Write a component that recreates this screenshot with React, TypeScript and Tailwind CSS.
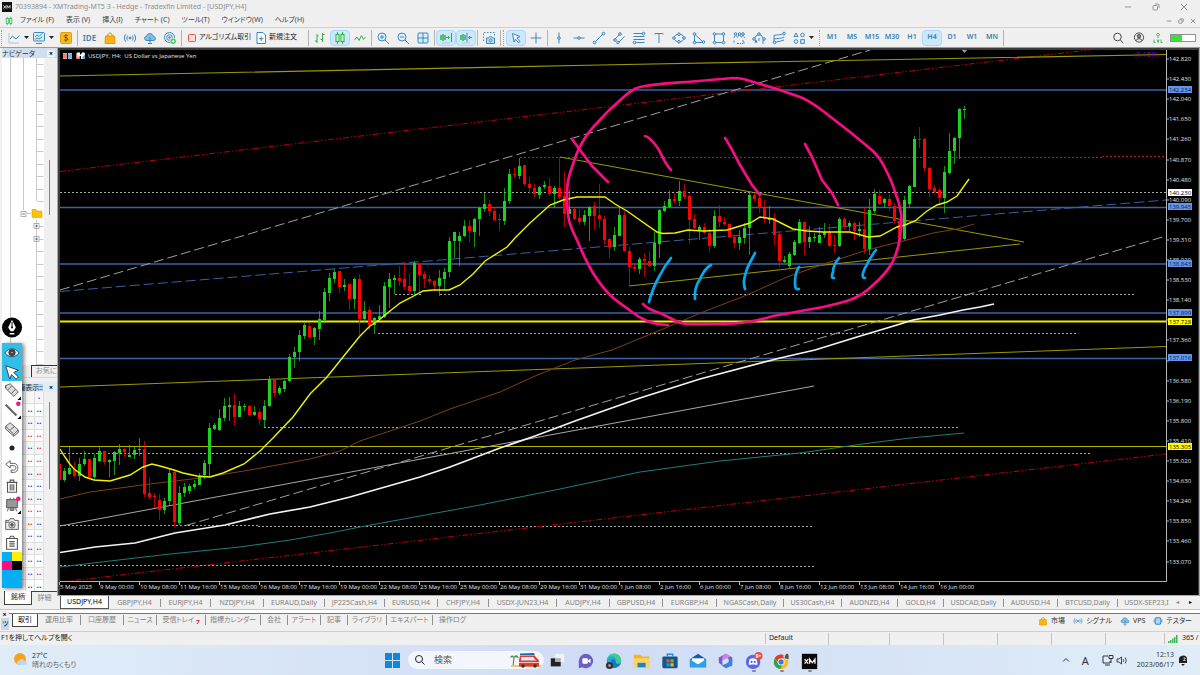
import { useState } from 'react';
import type { ReactNode } from 'react';

/* ---------- price chart data ---------- */

type Row = [string, number, number, number, number];

// Rows are [direction, body top, body bottom, high, low] in thirds of a unit below each block's origin.
const BLOCKS: { start: number; origin: number; rows: Row[] }[] = [
  {
    start: -1,
    origin: 260,
    rows: [
      ['r', 612, 660, 612, 660], ['g', 633, 660, 625, 665], ['g', 623, 642, 560, 645], ['r', 627, 648, 605, 652],
      ['g', 612, 648, 593, 663], ['g', 597, 612, 573, 617], ['r', 598, 652, 597, 657], ['g', 594, 652, 582, 660],
      ['g', 573, 602, 558, 607], ['r', 573, 606, 572, 615], ['g', 600, 606, 597, 651], ['g', 577, 602, 573, 645],
      ['g', 567, 578, 552, 615], ['r', 567, 576, 565, 590], ['g', 584, 590, 556, 592], ['g', 570, 584, 562, 597],
      ['g', 567, 571, 535, 587], ['r', 567, 701, 543, 710], ['r', 700, 710, 650, 719], ['r', 709, 711, 700, 744],
      ['r', 720, 750, 703, 779], ['g', 723, 750, 714, 761], ['g', 638, 723, 628, 735], ['r', 637, 786, 630, 802],
      ['g', 698, 788, 677, 795], ['g', 681, 699, 668, 711], ['g', 678, 692, 672, 701], ['g', 672, 681, 661, 686],
      ['g', 647, 674, 640, 676], ['g', 610, 645, 599, 656], ['g', 504, 612, 490, 650], ['g', 495, 506, 490, 510],
      ['g', 474, 510, 447, 512], ['g', 438, 474, 413, 482], ['g', 435, 440, 411, 482], ['r', 435, 470, 401, 498],
      ['g', 437, 470, 423, 471], ['g', 437, 441, 431, 452], ['r', 437, 465, 435, 468], ['g', 456, 465, 438, 467],
      ['r', 456, 478, 447, 495], ['g', 437, 479, 420, 503], ['g', 358, 438, 347, 442], ['r', 359, 399, 357, 410],
      ['g', 384, 398, 378, 405], ['g', 362, 387, 360, 397], ['g', 291, 363, 283, 365], ['g', 276, 291, 261, 323],
      ['g', 225, 275, 209, 304], ['g', 195, 227, 188, 237], ['r', 197, 230, 185, 231], ['g', 204, 230, 200, 255],
      ['g', 178, 206, 152, 239], ['g', 97, 180, 84, 190], ['g', 54, 98, 39, 123], ['g', 36, 56, 27, 69],
      ['r', 34, 82, 33, 100], ['g', 74, 82, 57, 92], ['r', 72, 117, 71, 150], ['g', 57, 117, 54, 146],
      ['r', 57, 177, 41, 226], ['g', 153, 177, 122, 185], ['r', 149, 194, 141, 209], ['g', 175, 194, 171, 222],
      ['g', 168, 177, 136, 180], ['g', 79, 171, 67, 173], ['g', 57, 80, 39, 145], ['g', 54, 60, 46, 102],
      ['r', 54, 62, 18, 78], ['r', 58, 80, 7, 90], ['r', 79, 94, 38, 105], ['g', 10, 94, 2, 104],
    ],
  },
  {
    start: 71,
    origin: 140,
    rows: [
      ['r', 373, 405, 371, 460], ['r', 403, 417, 394, 443], ['r', 417, 423, 405, 432], ['r', 422, 437, 420, 453],
      ['g', 414, 438, 391, 467], ['g', 396, 416, 385, 450], ['g', 303, 397, 290, 410], ['g', 277, 303, 275, 354],
      ['g', 287, 302, 277, 377], ['g', 259, 289, 240, 292], ['r', 258, 273, 241, 307], ['g', 237, 275, 234, 322],
      ['g', 205, 237, 201, 287], ['g', 192, 206, 159, 215], ['r', 191, 213, 180, 229], ['r', 212, 240, 203, 243],
      ['r', 237, 240, 222, 272], ['g', 183, 242, 145, 254], ['g', 102, 183, 86, 193], ['r', 102, 105, 84, 114],
      ['g', 77, 107, 54, 117], ['r', 76, 132, 75, 137], ['r', 132, 145, 110, 160], ['r', 144, 162, 132, 170],
      ['g', 140, 164, 137, 177], ['g', 134, 141, 123, 147], ['r', 138, 161, 113, 167], ['g', 144, 161, 138, 203],
      ['r', 143, 170, 50, 178], ['r', 168, 221, 95, 261], ['g', 206, 221, 150, 222], ['r', 206, 237, 203, 240],
      ['r', 234, 246, 207, 255], ['g', 225, 247, 210, 254], ['g', 202, 227, 198, 302], ['r', 199, 227, 186, 269],
      ['r', 225, 237, 131, 264], ['r', 237, 299, 229, 314], ['r', 297, 320, 295, 355], ['g', 285, 320, 262, 332],
      ['g', 225, 287, 200, 288], ['r', 225, 332, 212, 334],
    ],
  },
  {
    start: 113,
    origin: 70,
    rows: [
      ['r', 543, 592, 532, 648], ['r', 591, 597, 578, 603], ['g', 567, 598, 562, 612], ['r', 567, 573, 549, 620],
      ['r', 573, 587, 542, 591], ['g', 519, 587, 486, 602], ['g', 420, 522, 416, 563], ['g', 408, 422, 394, 427],
      ['g', 387, 411, 363, 413], ['r', 388, 393, 369, 403], ['g', 363, 394, 333, 408], ['r', 363, 381, 343, 386],
      ['r', 379, 450, 370, 521], ['r', 447, 473, 433, 476], ['g', 471, 480, 465, 509], ['r', 471, 490, 460, 492],
      ['r', 489, 528, 476, 545], ['g', 438, 528, 420, 535], ['r', 439, 457, 405, 472], ['r', 457, 463, 441, 467],
      ['r', 462, 502, 458, 503], ['r', 501, 520, 498, 535], ['g', 501, 520, 480, 539], ['g', 474, 503, 459, 521],
      ['g', 375, 474, 366, 556], ['r', 375, 387, 368, 393], ['r', 385, 415, 366, 430], ['r', 414, 447, 391, 460],
      ['g', 444, 449, 408, 463], ['r', 444, 495, 428, 526], ['r', 493, 573, 486, 590], ['g', 570, 575, 559, 580],
      ['g', 552, 589, 547, 594], ['g', 516, 555, 509, 558], ['g', 457, 519, 447, 522], ['r', 457, 515, 456, 555],
      ['g', 501, 516, 468, 533], ['g', 500, 505, 489, 515],
    ],
  },
  {
    start: 151,
    origin: 50,
    rows: [
      ['g', 555, 578, 530, 579], ['g', 546, 556, 520, 565], ['r', 547, 588, 521, 592], ['r', 586, 589, 556, 610],
      ['g', 508, 588, 502, 592], ['r', 508, 531, 501, 538], ['g', 519, 527, 514, 543], ['r', 519, 542, 516, 570],
      ['g', 538, 543, 517, 560], ['r', 538, 597, 472, 613], ['g', 480, 597, 447, 615], ['g', 432, 482, 417, 489],
      ['r', 437, 462, 420, 466], ['g', 448, 459, 445, 473], ['r', 448, 468, 433, 484], ['r', 468, 513, 458, 523],
      ['r', 512, 565, 508, 567], ['g', 450, 567, 437, 570], ['g', 408, 461, 405, 474], ['g', 268, 410, 258, 412],
      ['r', 267, 269, 231, 293], ['r', 267, 355, 264, 365], ['r', 354, 416, 350, 440], ['r', 414, 426, 405, 431],
      ['r', 421, 443, 415, 465], ['g', 367, 443, 347, 488], ['g', 303, 369, 248, 371], ['g', 264, 304, 260, 343],
      ['g', 178, 265, 174, 326], ['g', 177, 179, 168, 207],
    ],
  },
];

const CANDLES = BLOCKS.flatMap((b) =>
  b.rows.map(([dir, top, bottom, high, low], i) => {
    const y = (v: number) => Math.round(b.origin + v / 3);
    return { x: 64.5 + 5 * (b.start + i), dir, top: y(top), bottom: y(bottom), high: y(high), low: y(low) };
  }),
);

const PRICES = Array.from({ length: 26 }, (_, i) => (142.82 - 0.39 * i).toFixed(3));

const DATES = [
  '5 May 2023', '9 May 00:00', '10 May 08:00', '11 May 16:00', '15 May 00:00', '16 May 08:00', '17 May 16:00',
  '19 May 00:00', '22 May 08:00', '23 May 16:00', '25 May 00:00', '26 May 08:00', '29 May 16:00', '31 May 00:00',
  '1 Jun 08:00', '2 Jun 16:00', '6 Jun 00:00', '7 Jun 08:00', '8 Jun 16:00', '12 Jun 00:00', '13 Jun 08:00',
  '14 Jun 16:00', '16 Jun 00:00',
];

const LEVELS: { y: number; label: string; fill: string; ink: string }[] = [
  { y: 90, label: '142.234', fill: '#6495ed', ink: '#0b1c40' },
  { y: 193, label: '140.230', fill: '#ffffff', ink: '#000000' },
  { y: 207, label: '139.945', fill: '#6495ed', ink: '#0b1c40' },
  { y: 264, label: '138.843', fill: '#6495ed', ink: '#0b1c40' },
  { y: 313, label: '137.899', fill: '#6495ed', ink: '#0b1c40' },
  { y: 322, label: '137.728', fill: '#ffff00', ink: '#000000' },
  { y: 358, label: '137.016', fill: '#6495ed', ink: '#0b1c40' },
  { y: 447, label: '135.305', fill: '#ffff00', ink: '#000000' },
];

const DOTTED: [number, number, number][] = [
  [60, 1166, 192.5], [60, 1090, 453.5], [264, 960, 427.5], [60, 258, 525.5], [258, 814, 526.5],
  [60, 332, 565.5], [332, 814, 566.5], [378, 1076, 333.5], [395, 422, 294.5], [440, 1134, 294.5],
];

function Chart() {
  return (
    <svg viewBox="57 48 1143 548" className="block h-auto w-full" role="img" aria-label="USDJPY H4">
      <rect x="57" y="48" width="1143" height="548" fill="#a8a8a8" />
      <rect x="58" y="48" width="1141" height="547" fill="#3c3c3c" />
      <rect x="60" y="50" width="1138" height="545" fill="#000" />
      <clipPath id="plot">
        <rect x="60" y="50" width="1106" height="531" />
      </clipPath>
      <g clipPath="url(#plot)" fill="none">
        <g stroke="#3c62a4">
          {[90, 207.5, 264, 313, 358.5].map((y) => (
            <path key={y} d={`M60 ${y}H1166`} strokeWidth={1.3} />
          ))}
        </g>
        <path d="M60 446.5H1166" stroke="#b4b400" />
        <path d="M60 321.5H1166" stroke="#eeee00" strokeWidth={1.8} />
        <g stroke="#a8a8a8" strokeDasharray="2 2">
          {DOTTED.map(([a, b, y]) => (
            <path key={`${a}-${y}`} d={`M${a} ${y}H${b}`} />
          ))}
        </g>
        <path d="M520 157.5H1102M1102 156.5H1166" stroke="#b01830" strokeDasharray="2 2" />
        <g stroke="#c00000" strokeDasharray="6 2 1.5 2 1.5 2">
          <path d="M60 171.500L1097 49" />
          <path d="M60 582L1166 454" />
        </g>
        <g stroke="#9a9a00">
          <path d="M60 76L600 65L1166 54.500" strokeWidth={1.2} />
          <path d="M60 387L1166 346.500" />
          <path d="M560 157L1024 242M629 286L1020 244" />
        </g>
        <path d="M60 291.500L1166 200" stroke="#3a5ea5" strokeDasharray="10 4" />
        <g stroke="#a0a0a0" strokeDasharray="10 4">
          <path d="M60 290L870 50" />
          <path d="M186 525.500L1166 236" />
        </g>
        <path d="M60 526L814 386" stroke="#a8a8a8" />
        <path
          d="M60 499L90 492L150 484L200 478L250 470L310 459L340 451L360 441L390 431L420 421L450 409L500 392L535 376L575 360L612 350L663 329L703 312L747 295L787 277L830 262L867 250L907 240L933 233L957 229L974 224"
          stroke="#7c4015"
        />
        <path
          d="M60 567L110 561L170 554L240 547L290 540L330 533L360 527L420 516L480 505L560 489L640 472L720 461L800 453L870 443L910 438L964 433"
          stroke="#1f7f74"
        />
        {CANDLES.map((c) => (
          <g key={c.x} fill={c.dir === 'g' ? '#1fd01f' : '#ff0000'}>
            <rect x={c.x - 0.5} y={c.high} width={1} height={c.low - c.high} opacity={0.7} />
            <rect x={c.x - 1.5} y={c.top} width={3} height={Math.max(1, c.bottom - c.top)} />
          </g>
        ))}
        <path
          d="M60 552.500L95 547L135 543L175 533L225 525L270 514L310 507L350 497L385 487L420 477L450 467L500 448L535 436L575 421L640 398L700 379L780 358L815 350L857 337L897 325L913 320L940 315L963 310L980 307L994 304"
          stroke="#f4f4f4"
          strokeWidth={1.7}
        />
        <path
          d="M60 449L65 457L69 463L74 469L85 477L94 480L110 481L120 478L130 475L143 467L152 464L160 466L174 470L183 473L197 476L210 477L223 473L244 464L260 451L273 438L293 417L310 394L327 377L343 357L360 336L370 326L379 320L390 311L400 303L410 298L423 291L433 290L449 290L460 285L473 274L485 261L507 247L515 238L530 223L550 205L563 200L577 197L605 197L615 204L627 211L657 232L663 233.500L675 233L688 230L703 231L727 230L750 223L760 217L773 219L793 229L807 231L823 232L850 232L868 237L880 236L897 227L905 225L915 221L927 211L937 205L947 202L957 196L969 179"
          stroke="#f2f200"
          strokeWidth={1.4}
        />
        <g strokeLinecap="round" strokeLinejoin="round" strokeWidth={2.7}>
          <g stroke="#f90c84">
            <path d="M668 325C650 324 641 319 632 312C624 306 616 301 610 295C604 289 598 281 593 273C587 263 582 252 577 240C573 232 570 226 569 220C567 210 567 202 567 193C567 183 569 175 572 167C575 158 577 151 582 143C587 134 592 128 598 122C604 115 610 109 617 103C625 96 631 89 640 87C655 84 672 83 687 82L733 78C740 78 745 79 750 81L777 89L800 97C808 100 815 105 823 111L850 132L873 151C878 156 882 162 885 168C889 176 893 184 895 192C898 199 900 206 901 213C902 221 901 230 900 237C899 247 896 255 892 263C887 272 880 279 873 285C866 292 858 297 850 300C841 303 832 305 823 307L790 313L773 316C764 319 756 321 747 322C736 324 724 324 713 324C702 324 690 325 680 323C673 320 667 316 660 313C654 311 646 308 643 304" />
            <path d="M572 139L583 154L592 166L608 182" />
            <path d="M645 136C650 137 653 142 657 147C662 154 664 163 671 170" />
            <path d="M725 138C730 145 734 154 740 165L752 185L760 195" />
            <path d="M805 144L812 157L822 180L832 193L838 205" />
          </g>
          <g stroke="#06a8f0">
            <path d="M671 258C666 264 663 269 660 275C655 284 652 290 649 302" />
            <path d="M711 265C705 268 703 273 700 279C696 285 694 290 695 299" />
            <path d="M755 253C751 261 748 265 746 272C744 279 743 283 745 289" />
            <path d="M799 267C795 272 795 278 795 283C795 288 796 290 799 289" />
            <path d="M839 258C834 264 833 268 833 272C832 275 831 278 834 278" />
            <path d="M876 250C871 256 868 262 865 268C863 272 861 278 865 278" />
          </g>
        </g>
      </g>
      <path d="M1166.500 50V581.500H60" fill="none" stroke="#b4b4b4" />
      <path d="M962 50h5l-2.500 3z" fill="#8ba3b8" />
      <g fontFamily="'Open Sans', 'Noto Sans', sans-serif" fontSize="6" fill="#e4e4e4">
        {PRICES.map((p, i) => (
          <g key={p}>
            <path d={`M1166 ${Math.round(59 + 20.1 * i)}h3`} stroke="#b4b4b4" />
            {p !== '137.750' && p !== '136.970' && (
              <text x="1169" y={Math.round(61 + 20.1 * i)}>{p}</text>
            )}
          </g>
        ))}
        {LEVELS.map((l) => (
          <g key={l.label}>
            <rect x="1168" y={l.y - 4} width="24" height="7" fill={l.fill} />
            <text x="1169" y={l.y + 2} fill={l.ink}>{l.label}</text>
          </g>
        ))}
        {DATES.map((d, i) => (
          <g key={d}>
            <path d={`M${59.5 + 40 * i} 582v3`} stroke="#b4b4b4" />
            <text x={60 + 40 * i} y="589">{d}</text>
          </g>
        ))}
        <text x="88" y="58">{'USDJPY, H4:\u00a0 US Dollar vs Japanese Yen'}</text>
        <text x="1135" y="57" fontSize="7" fill="#7d08c4">(1.15%)</text>
      </g>
      <g>
        <rect x="63" y="53" width="4" height="6" fill="#f2a0a0" />
        <rect x="68" y="53" width="4" height="6" fill="#8cc4ee" />
        <path d="M63 55h4M63 57h4" stroke="#d64545" strokeWidth=".6" />
        <path d="M68 55h4M68 57h4" stroke="#3b8ac8" strokeWidth=".6" />
        <path d="M76 53h4v6h-4z" fill="#e87070" />
        <path d="M81 53h4v6h-4z" fill="#58a8e0" />
        <path d="M77 52.500h3v2h2v-2h2.500v2.500l-2 1.500v2.500h-1.500v-3h-2v1.500h-1.500z" fill="#fff" />
      </g>
    </svg>
  );
}

/* ---------- small line icons, 14 x 14 grid ---------- */

const BLUE = '#3b87c0';
const node = (x: number, y: number) => <circle key={`${x}-${y}`} cx={x} cy={y} r="1.300" fill="#c9e5f8" />;

const ICONS: Record<string, ReactNode> = {
  line: <><path d="M2 2v10h10" stroke="#c0c0c0" /><path d="M3 8l2.500-3l3.500 3l3.500-3.500" /></>,
  template: <><rect x="1.500" y="1.500" width="11" height="8.500" rx="1" fill="#d5ecfb" /><path d="M4 12.500h6" /><path d="M3 6l2-2l2 1.500l3-3" stroke="#34b44a" /><path d="M3 8.500l2-1.500l2 1l3-2" /></>,
  dollar: <><rect x="1.500" y="1.500" width="11" height="11" rx="1" fill="#f5b921" stroke="#e0a010" /><path d="M9 4.800c-1-.8-3.800-.8-3.800.7s3.800 1 3.800 2.600s-2.800 1.600-4 .6M7 3.200v7.600" stroke="#8a5a00" /></>,
  bag: <><path d="M2.500 5h9l.5 7.500h-10z" fill="#fbb416" stroke="#e59a00" /><path d="M4.800 5c0-4 4.400-4 4.400 0" stroke="#c98500" /></>,
  signal: <><circle cx="7" cy="7" r="1" fill={BLUE} /><path d="M4.800 4.500c-1.200 1.500-1.200 3.500 0 5M2.800 3.200c-1.900 2.300-1.900 5.300 0 7.600M9.200 4.500c1.200 1.500 1.200 3.500 0 5M11.200 3.200c1.900 2.300 1.900 5.300 0 7.600" /></>,
  cloud: <><path d="M4 9.500c-3 0-3.300-3.800-.6-4c.4-3.800 6.200-4 7 0c2.800.2 2.600 4 0 4z" fill="#7fbfe8" /><path d="M7 6v6.500M5 12.500h4" /></>,
  target: <><circle cx="6.500" cy="6.500" r="5" /><circle cx="6.500" cy="6.500" r="2.800" /><circle cx="6.500" cy="6.500" r=".8" fill={BLUE} /><circle cx="10.200" cy="10.200" r="3" fill="#34c24a" stroke="#fff" strokeWidth=".6" /><path d="M8.700 10.200h3M10.200 8.700v3" stroke="#fff" /></>,
  stop: <rect x="3.500" y="3.500" width="7" height="7" rx="1" fill="#fbdcd8" stroke="#e0554a" />,
  neworder: <><path d="M3 1.500h6l2.500 2.500v8.500h-8.500z" fill="#fff" /><path d="M7.200 5.500v4.500M5 7.700h4.500" /></>,
  bars: <g stroke="#38b048"><path d="M4 3v9M2 10h2M4 5h1.500M9.500 2v9M7.500 8.500h2M9.500 3.500h2" /></g>,
  candles: <g stroke="#22b43c"><path d="M4.500 1v12M9.500 1v12" /><rect x="3" y="3.500" width="3" height="7" fill="#d7f6dc" /><rect x="8" y="3.500" width="3" height="7" fill="#d7f6dc" /></g>,
  zigzag: <path d="M1.500 9l2.500-3l2 3.500l2.500-5l2 4l2-2.500" stroke="#38b048" />,
  zoomin: <><circle cx="6" cy="6" r="4" fill="#e2f2fc" /><path d="M9 9l4 4M4 6h4M6 4v4" /></>,
  zoomout: <><circle cx="6" cy="6" r="4" fill="#e2f2fc" /><path d="M9 9l4 4M4 6h4" /></>,
  grid: <><rect x="2" y="2" width="10" height="10" rx="1" fill="#d8eefb" /><path d="M7 2v10M2 7h10" /></>,
  scroll: <><path d="M2 4v5M4 3v7M6 4v5" stroke="#2db445" strokeWidth="1.500" /><path d="M7 6.500h3M9 5l1.500 1.500L9 8" stroke="#2db445" /><path d="M12.500 2v9" /><path d="M3 12h8" stroke="#b8c8d4" /></>,
  shift: <><path d="M2 4v5M4 3v7M6 4v5" stroke="#2db445" strokeWidth="1.500" /><path d="M8 2v9M13 6.500h-3M11 5l-1.500 1.500L11 8" /><path d="M3 12h8" stroke="#b8c8d4" /></>,
  capture: <><path d="M1.500 10V1.500h11V5" strokeDasharray="1.500 1.500" /><path d="M4.500 7h2l.8-1.200h2.400l.8 1.200h2v5.500h-8z" fill="#bfe0f5" /><circle cx="8.500" cy="9.500" r="1.400" /></>,
  cursor: <path d="M3.500 2.500l7.500 3l-3 1.500l3 3.500l-1.500 1.200l-3-3.500l-1.500 2.800z" fill="#eaf6fe" />,
  cross: <path d="M7 1.500v11M1.500 7h11" />,
  vline: <><path d="M7 1.500v11" />{node(7, 7)}</>,
  hline: <><path d="M1.500 7h11" />{node(7, 7)}</>,
  trend: <><path d="M2.500 11.500l9-9" />{node(2.500, 11.500)}{node(11.500, 2.500)}</>,
  channel: <><path d="M2 9l6-6M6 12l6.500-6.500" />{node(3, 9)}{node(8, 3)}{node(6, 11.500)}</>,
  fibo: <><path d="M1.500 2.500h10M1.500 5.500h11M1.500 8.500h11M3 11.500h9.500" />{node(11.500, 2.500)}{node(2.500, 11.500)}</>,
  text: <path d="M3 3.500v-1h8v1M7 2.500v9.500" />,
  ellipse: <><ellipse cx="7" cy="7" rx="5" ry="3.800" />{node(2, 7)}{node(12, 7)}{node(7, 3.200)}{node(7, 10.800)}</>,
  triangle: <><path d="M2.500 3v8.500h9z" />{node(2.500, 3)}{node(2.500, 11.500)}{node(11.500, 11)}</>,
  square: <><path d="M2.500 3h9v8.500h-9z" />{node(2.500, 3)}{node(11.500, 3)}{node(2.500, 11.500)}{node(11.500, 11.500)}</>,
  elliott: <><path d="M2 7l1.500-3.500l2 3l2-4l2 4l1.500-3l1.500 3.500M2 9.500v3M5 12.500h4M10 10h2v2.500h-2" strokeDasharray="2 .8" />{node(3.500, 3)}{node(7.500, 3)}{node(11, 3)}</>,
  abc: <><path d="M2 8l3-4h4l3 4M3 12l1-3l1 3M10 10h2M10 12h2M7 7v3" />{node(7, 3)}{node(2, 8)}{node(12, 8)}</>,
  pitch: <><path d="M2 4.500c3-1 6 0 10-2M2 8c4-1 7 0 10-2M2 11.500c4-1 6-1 10-2.500M2 4.500v7" />{node(12, 2.500)}{node(2.500, 11.500)}</>,
  shapes: <><path d="M4 2l2 3.500h-4z" /><circle cx="10.500" cy="4" r="1.800" /><circle cx="4" cy="10.500" r="1.800" /><rect x="8.700" y="8.700" width="3.600" height="3.600" /></>,
  search: <><circle cx="6.500" cy="6" r="3.800" stroke="#4a4a4a" /><path d="M9.300 8.800l3 3.400" stroke="#4a4a4a" /></>,
  user: <g stroke="#4a4a4a"><circle cx="7" cy="6.500" r="4.600" /><circle cx="7" cy="5.200" r="1.700" fill="#8a8a8a" /><path d="M3.800 9.800c1-2.800 5.400-2.800 6.400 0" /></g>,
  chip: <><rect x="3" y="2.500" width="8" height="9" rx="2" fill="#a8d6f4" strokeWidth="1.500" /><path d="M1.500 5v4M12.500 5v4" /></>,
};

function Icon({ name, className = 'size-3.5' }: { name: string; className?: string }) {
  return (
    <svg viewBox="0 0 14 14" className={`${className} shrink-0`} fill="none" stroke={BLUE} strokeWidth="1" aria-hidden="true">
      {ICONS[name]}
    </svg>
  );
}

function Tool({ name, on }: { name: string; on?: boolean }) {
  return (
    <button
      type="button"
      aria-label={name}
      className={`flex h-4 w-5 shrink-0 items-center justify-center ${on ? 'rounded-sm border border-[#a8d8fa] bg-[#cce8ff]' : ''}`}
    >
      <Icon name={name} />
    </button>
  );
}

function Caret() {
  return (
    <svg viewBox="0 0 5 5" className="w-[5px] shrink-0" aria-hidden="true">
      <path d="M0 1h5L2.500 4z" fill="#222" />
    </svg>
  );
}

const Divider = () => <span className="mx-px h-4 w-px shrink-0 bg-[#b4b4b4]" />;
const Grip = () => <span className="mx-px h-4 w-0.5 shrink-0 border-l border-dotted border-[#a0a0a0]" />;

/* ---------- window header ---------- */

const MENUS = ['ファイル (F)', '表示 (V)', '挿入(I)', 'チャート (C)', 'ツール(T)', 'ウインドウ(W)', 'ヘルプ(H)'];
const FRAMES = ['M1', 'M5', 'M15', 'M30', 'H1', 'H4', 'D1', 'W1', 'MN'];

function WindowButtons({ small }: { small?: boolean }) {
  const size = small ? 'size-1.5' : 'size-2';
  const line = { fill: 'none', stroke: '#8c8c8c', strokeWidth: small ? 1.2 : 0.9 };
  return (
    <div className={`ml-auto flex items-center ${small ? 'gap-1.5 pr-1' : 'gap-5 pr-3'}`}>
      <button type="button" aria-label="最小化"><svg viewBox="0 0 8 8" className={size} {...line}><path d="M1 4h6" /></svg></button>
      <button type="button" aria-label="元に戻す"><svg viewBox="0 0 8 8" className={size} {...line}><rect x="1" y="2.500" width="4.500" height="4.500" rx="1" /><path d="M3 1h3c.8 0 1 .3 1 1v3" /></svg></button>
      <button type="button" aria-label="閉じる"><svg viewBox="0 0 8 8" className={size} {...line}><path d="M1 1l6 6M7 1l-6 6" /></svg></button>
    </div>
  );
}

function Header() {
  const [frame, setFrame] = useState('H4');
  return (
    <header className="bg-[#f0f0f0]">
      <div className="flex h-[14px] items-center pl-0.5 text-[7px] text-[#8e8e8e]">
        <svg viewBox="0 0 20 20" className="mr-[3px] size-2.5" aria-hidden="true">
          <rect width="20" height="20" fill="#111" />
          <path d="M3 7l5 6M8 7l-5 6M10 13V7l3 4l3-4v6" stroke="#fff" strokeWidth="1.600" fill="none" />
          <path d="M3 15h3" stroke="#e33" />
        </svg>
        <h1>70393894 - XMTrading-MT5 3 - Hedge - Tradexfin Limited - [USDJPY,H4]</h1>
        <WindowButtons />
      </div>
      <nav className="flex h-[13px] items-center gap-3 pl-1 text-[7px] text-[#3c3c3c]">
        <span className="-mr-1.5 flex w-2.5"><Icon name="candles" className="size-2.5" /></span>
        {MENUS.map((m) => <button key={m} type="button">{m}</button>)}
        <WindowButtons small />
      </nav>
      <div className="flex h-[21px] items-center border-y border-t-[#cfcfcf] border-b-[#9a9a9a] text-[7px]">
        <Grip />
        <Tool name="line" /><Caret />
        <Tool name="template" /><Caret />
        <span className="w-0.5" />
        <Tool name="dollar" />
        <Divider />
        <button type="button" className="w-[21px] text-[8px] font-semibold text-[#3b80b4]">IDE</button>
        <Tool name="bag" /><Tool name="signal" /><Tool name="cloud" /><Tool name="target" />
        <Divider />
        <button type="button" className="flex w-[70px] items-center whitespace-nowrap pl-0.5 text-[#222]"><Icon name="stop" />アルゴリズム取引</button>
        <button type="button" className="flex w-[54px] items-center gap-px whitespace-nowrap pl-px text-[#222]"><Icon name="neworder" />新規注文</button>
        <Divider />
        <Tool name="bars" /><Tool name="candles" on /><Tool name="zigzag" />
        <Divider />
        <Tool name="zoomin" /><Tool name="zoomout" /><Tool name="grid" />
        <Divider />
        <Tool name="scroll" on /><Tool name="shift" on />
        <Divider />
        <Tool name="capture" />
        <Divider />
        <Grip />
        <Tool name="cursor" on /><Tool name="cross" />
        <Divider />
        {['vline', 'hline', 'trend', 'channel', 'fibo', 'text', 'ellipse', 'triangle', 'square', 'elliott', 'abc', 'pitch', 'shapes'].map((n) => (
          <Tool key={n} name={n} />
        ))}
        <Caret />
        <span className="w-1" />
        <Grip />
        {FRAMES.map((f) => (
          <button
            key={f}
            type="button"
            onClick={() => setFrame(f)}
            className={`h-4 w-5 shrink-0 text-[7px] font-semibold text-[#3b7fae] ${f === frame ? 'rounded-sm border border-[#a8d8fa] bg-[#cce8ff]' : ''}`}
          >
            {f}
          </button>
        ))}
        <Divider />
        <div className="ml-auto flex items-center gap-[7px] pr-1">
          <button type="button" aria-label="検索"><Icon name="search" /></button>
          <button type="button" aria-label="アカウント"><Icon name="user" /></button>
          <svg viewBox="0 0 10 12" className="h-3 w-2.5" fill="none" stroke="#2cb642" aria-hidden="true">
            <path d="M5 1l1.800 1.800L5 4.500L3.200 2.800zM5 4.500v1.500M1 7.500v3h1.500M4 7.500l1 3l1-3M8 7.500v3h1.500" strokeWidth=".9" />
          </svg>
          <span className="flex h-2 w-[26px] border border-[#909090] bg-white"><span className="w-[11px] bg-[#3fdc3f]" /></span>
        </div>
      </div>
    </header>
  );
}

/* ---------- left side: navigator and market watch ---------- */

function Tree() {
  const ticks = [64, 76, 89, 101, 114, 126, 139, 151, 164, 176, 189, 201, 226, 239, 251, 264, 276, 289, 301, 314, 326, 339, 351, 364];
  return (
    <svg viewBox="2 58 42 307" className="h-[307px] w-[42px] shrink-0 bg-white" aria-hidden="true">
      <g stroke="#c9c9c9" fill="none">
        <path d="M10.500 58V365M23.500 58V210M36.500 58V201M36.500 220V365M27 213.500h4" />
        {ticks.map((y) => <path key={y} d={`M37 ${y}.5h6.500`} />)}
      </g>
      <path d="M32 209.500h4l1 1.500h5v6.500h-10z" fill="#fcc30b" stroke="#dba100" strokeWidth=".6" />
      {[[23, 214], [36, 226], [36, 239]].map(([x, y], i) => (
        <g key={y}>
          <rect x={x - 2} y={y - 2.500} width="5" height="5" fill="#fff" stroke="#a0a0a0" strokeWidth=".8" />
          <path d={i ? `M${x - 1} ${y}h3M${x + 0.5} ${y - 1.500}v3` : `M${x - 1} ${y}h3`} stroke="#4466aa" strokeWidth=".8" />
        </g>
      ))}
    </svg>
  );
}

const QUOTES = ['', 'bb', 'bb', 'rr', 'br', 'rr', 'br', 'bb', 'bb', 'rr', 'rb', 'bb', 'br', 'bb', 'br', 'bb'];
const quoteInk = (c: string) => (c === 'r' ? 'text-[#e83030]' : 'text-[#2848e0]');

function Side() {
  return (
    <aside className="flex w-[57px] shrink-0 flex-col overflow-hidden bg-[#f0f0f0] pl-0.5 text-[7px] text-[#333]">
      <div className="flex h-2.5 items-center justify-between bg-[#cfdff0] pr-0.5 leading-none">
        ナビゲータ<button type="button" aria-label="閉じる" className="bg-[#f0f0f0] px-0.5 font-bold text-black">×</button>
      </div>
      <div className="flex">
        <Tree />
        <span className="mt-[102px] ml-[5px] h-[55px] w-px bg-[#858585]" />
      </div>
      <div className="flex h-[13px] items-center justify-end border-b border-[#d8d8d8] whitespace-nowrap text-[#888]">
        <span className="flex h-full w-[26px] items-center overflow-hidden border-t border-l border-[#333] pl-1">お気に入り</span>
      </div>
      <div className="mt-1 flex h-2.5 items-center justify-end bg-[#e4ebf2] pr-0.5 leading-none">
        <span className="overflow-hidden bg-[#bcd7ee] whitespace-nowrap">値表示::</span>
        <button type="button" aria-label="閉じる" className="ml-1 px-0.5 font-bold text-black">×</button>
      </div>
      <div className="flex h-[199px] overflow-hidden">
        <table className="h-[201px] w-[42px] border-collapse bg-white text-center text-[9px] leading-none font-bold">
          <tbody>
            {QUOTES.map((q, i) => (
              <tr key={i} className={i % 2 ? 'bg-white' : 'bg-[#f6f6f6]'}>
                <td className="w-6 border-b border-[#dedede] p-0" />
                <td className={`w-[9px] border border-t-0 border-[#dedede] p-0 ${quoteInk(q[0])}`}>{q ? '··' : ''}</td>
                <td className={`w-[9px] border border-t-0 border-[#dedede] p-0 ${quoteInk(q[1])}`}>{q ? '··' : '·'}</td>
              </tr>
            ))}
          </tbody>
        </table>
        <span className="mt-2.5 ml-[5px] h-[87px] w-px bg-[#858585]" />
      </div>
      <div className="flex h-[15px] text-[7px]">
        <button type="button" className="ml-0.5 h-3.5 w-7 border border-t-0 border-[#444] bg-white">銘柄</button>
        <button type="button" className="h-3.5 flex-1 border-t border-[#444] text-[#888]">詳細</button>
      </div>
    </aside>
  );
}

/* ---------- floating drawing palette ---------- */

const PENS: { name: string; art: ReactNode }[] = [
  { name: '鉛筆', art: <><path d="M3 4l5-2l9 9l-5 5l-9-9zM3 4v3M5 9l5-5M9 13l5-5" fill="#ddd" /><path d="M20 16v4h-4z" fill="#000" stroke="none" /></> },
  { name: '線', art: <><path d="M3 4l12 12" strokeWidth="2.500" stroke="#666" /><path d="M4 3l12 12" stroke="#fff" /><path d="M20 16v4h-4z" fill="#000" stroke="none" /><circle cx="17" cy="3" r="2.500" fill="#f90c84" stroke="none" /></> },
  { name: '消しゴム', art: <path d="M3 7l5-4l9 8l-5 5zM3 7v3l9 8v-2M8 11l5-4M17 11v3l-5 4" fill="#ddd" /> },
  { name: '点', art: <circle cx="10" cy="10" r="2.800" fill="#222" stroke="none" /> },
  { name: '元に戻す', art: <path d="M8 3l-5 4l5 4V8.500h4c3 0 3 5 0 5h-3v2.500h3c6 0 6-10 0-10H8z" fill="#fff" /> },
  { name: 'ゴミ箱', art: <path d="M4 6h12M8 6V3.500h4V6M5 6v11h10V6M8 8v7M10 8v7M12 8v7" strokeWidth="1.200" /> },
  { name: '画面', art: <><path d="M4 4h12v9H4zM6 13l-1 4M14 13l1 4M8 4V2M12 4V2M8 13v3h4v-3" fill="#999" /><path d="M20 16v4h-4z" fill="#000" stroke="none" /><circle cx="17" cy="3" r="2.500" fill="#f90c84" stroke="none" /></> },
  { name: 'カメラ', art: <><path d="M3 6h4l1-2h4l1 2h4v10H3z" fill="#eee" /><circle cx="10" cy="11" r="3.500" /><circle cx="10" cy="11" r="1.500" fill="#555" /><path d="M3 8h4" /></> },
  { name: 'クリップボード', art: <path d="M4 5h12v12H4zM7 5l1.500-2.500h3L13 5M7 8.500h6M7 11h6M7 13.500h6" strokeWidth="1.200" fill="#fff" /> },
];

function Palette() {
  return (
    <div className="absolute top-[317px] left-0.5">
      <button type="button" aria-label="ペン" className="mb-[5px] block">
        <svg viewBox="0 0 22 22" className="size-[21px]">
          <circle cx="10.500" cy="11" r="10.500" fill="#000" />
          <path d="M10.500 3l4 8l-2.500 4h-3l-2.500-4z" fill="#fff" />
          <path d="M10.500 5v6M8.500 17h4" stroke="#000" />
          <path d="M8 17.500h5" stroke="#fff" strokeWidth="1.500" />
          <circle cx="10.500" cy="11" r="1" fill="#000" />
        </svg>
      </button>
      <div className="w-5 bg-white shadow-[2px_1px_4px_rgba(0,0,0,0.5)]">
        <div className="bg-[#30bfeb]">
          <button type="button" aria-label="表示" className="flex h-[19px] w-full items-center justify-center">
            <svg viewBox="0 0 20 14" className="h-3 w-4" fill="#eee" stroke="#333">
              <path d="M1 7c5-7 13-7 18 0c-5 6-13 6-18 0z" /><circle cx="10" cy="6.500" r="4" fill="#444" /><circle cx="10" cy="6.500" r="1.500" fill="#ccc" />
            </svg>
          </button>
          <button type="button" aria-label="選択" className="flex h-[19px] w-full items-center justify-center">
            <svg viewBox="0 0 20 20" className="size-[18px]" fill="#fff" stroke="#333">
              <path d="M3 3l14 5l-5 2.500l5 5l-2.500 2.500l-5-5l-2 5z" />
            </svg>
          </button>
        </div>
        {PENS.map((p) => (
          <button key={p.name} type="button" aria-label={p.name} className="flex h-[19px] w-full items-center justify-center">
            <svg viewBox="0 0 20 20" className="size-[18px]" fill="none" stroke="#555" strokeWidth="1">{p.art}</svg>
          </button>
        ))}
        <div className="grid grid-cols-2">
          <span className="h-[9px] bg-[#04aef0]" /><span className="h-[9px] bg-[#fff000]" />
          <span className="h-[9px] bg-[#f90c84]" /><span className="h-[9px] bg-black" />
        </div>
        <div className="h-[18px] bg-[#04aef0]" />
      </div>
    </div>
  );
}

/* ---------- tab strips and status ---------- */

const CHART_TABS: [string, string][] = [
  ['GBPJPY,H4', 'w-[52px]'], ['EURJPY,H4', 'w-[50px]'], ['NZDJPY,H4', 'w-[53px]'], ['EURAUD,Daily', 'w-[61px]'],
  ['JP225Cash,H4', 'w-[60px]'], ['EURUSD,H4', 'w-[53px]'], ['CHFJPY,H4', 'w-[51px]'], ['USDX-JUN23,H4', 'w-[68px]'],
  ['AUDJPY,H4', 'w-[53px]'], ['GBPUSD,H4', 'w-[53px]'], ['EURGBP,H4', 'w-[54px]'], ['NGASCash,Daily', 'w-[67px]'],
  ['US30Cash,H4', 'w-[58px]'], ['AUDNZD,H4', 'w-[56px]'], ['GOLD,H4', 'w-[46px]'], ['USDCAD,Daily', 'w-[60px]'],
  ['AUDUSD,H4', 'w-[54px]'], ['BTCUSD,Daily', 'w-[60px]'], ['USDX-SEP23,I', 'w-[57px]'],
];

const TOOL_TABS: [string, string][] = [
  ['運用比率', 'w-[43px]'], ['口座履歴', 'w-[43px]'], ['ニュース', 'w-[33px]'], ['受信トレイ', 'w-[49px]'],
  ['指標カレンダー', 'w-[55px]'], ['会社', 'w-[27px]'], ['アラート', 'w-[33px]'], ['記事', 'w-[27px]'],
  ['ライブラリ', 'w-[39px]'], ['エキスパート', 'w-[46px]'], ['操作ログ', 'w-[39px]'],
];

const LINKS: [string, string][] = [['bag', '市場'], ['signal', 'シグナル'], ['cloud', 'VPS'], ['chip', 'テスター']];

function ChartTabs() {
  return (
    <div className="flex h-[13px] items-center overflow-hidden pl-[3px] text-[7px] text-[#808080]">
      <button type="button" className="h-full w-[49px] shrink-0 border border-t-0 border-[#555] bg-white text-black">USDJPY,H4</button>
      {CHART_TABS.map(([t, w], i) => (
        <button key={t} type="button" className={`${w} h-2 shrink-0 whitespace-nowrap leading-none ${i < CHART_TABS.length - 1 ? 'border-r border-[#909090]' : ''}`}>
          {t}
        </button>
      ))}
      <span className="ml-auto flex gap-2.5 pr-2 text-[6px]"><button type="button">◂</button><button type="button" className="text-black">▸</button></span>
    </div>
  );
}

function Toolbox() {
  return (
    <section className="flex h-[22px] border-t border-[#c8c8c8] bg-[#f0f0f0] text-[7px]">
      <div className="flex w-[9px] flex-col items-center">
        <button type="button" aria-label="閉じる" className="h-2 text-[7px] leading-[7px] font-bold">×</button>
        <span className="h-3 w-2 overflow-hidden bg-[#c5d8ea] pt-0.5 text-[7px] leading-[8px] [writing-mode:vertical-rl]">ツール</span>
      </div>
      <div className="flex flex-1 flex-col">
        <div className="h-1 border-b border-[#777] bg-white" />
        <div className="flex flex-1 items-start">
          <button type="button" className="ml-[3px] h-[13px] w-[26px] border border-t-0 border-[#444] bg-white leading-[12px]">取引</button>
          {TOOL_TABS.map(([t, w], i) => (
            <button key={t} type="button" className={`${w} mt-px h-2.5 whitespace-nowrap leading-[10px] text-[#808080] ${i < TOOL_TABS.length - 1 ? 'border-r border-[#909090]' : ''}`}>
              {t}{t === '受信トレイ' && <sub className="ml-0.5 text-[6px] font-bold text-red-600">7</sub>}
            </button>
          ))}
          <div className="mt-0.5 ml-auto flex items-center gap-2 pr-2">
            {LINKS.map(([icon, label]) => (
              <a key={label} href={`#${icon}`} className="flex items-center gap-[3px] leading-[10px] text-[#333]"><Icon name={icon} className="size-2.5" />{label}</a>
            ))}
          </div>
        </div>
      </div>
    </section>
  );
}

function Status() {
  return (
    <footer className="flex h-[14px] items-center border-t border-[#d0d0d0] bg-[#f0f0f0] pl-px text-[7px] text-[#222]">
      <span className="flex-1">F1を押してヘルプを開く</span>
      <span className="w-[63px] border-l border-[#c4c4c4] pl-[3px]">Default</span>
      <span className="h-3 w-[61px] border-l border-[#c4c4c4]" />
      {[0, 1, 2, 3].map((n) => <span key={n} className="h-3 w-[54px] border-l border-[#c4c4c4]" />)}
      <span className="h-3 w-[59px] border-l border-[#c4c4c4]" />
      <span className="flex w-9 items-center gap-1 border-l border-[#c4c4c4] pl-[3px]">
        <svg viewBox="0 0 10 8" className="h-2 w-2.5 shrink-0" fill="#3cb85a" aria-hidden="true">
          <path d="M0 6h1.500v2h-1.500zM2 5h1.500v3h-1.500zM4 3.500h1.500v4.500h-1.500zM6 2h1.500v6h-1.500zM8 0h1.500v8h-1.500z" />
        </svg>
        <span className="whitespace-nowrap">365 /</span>
      </span>
    </footer>
  );
}

/* ---------- desktop task bar ---------- */

const APPS: { name: string; open?: boolean; art: ReactNode }[] = [
  { name: 'タスク ビュー', art: <><rect x="2" y="7" width="11" height="9" fill="#222" /><rect x="7" y="2" width="10" height="9" fill="#f4f4f4" opacity=".9" /><rect x="7" y="7" width="6" height="4" fill="#aaa" /></> },
  { name: 'チャット', art: <><path d="M10 2a8 8 0 1 1-4 15l-4 1V10a8 8 0 0 1 8-8z" fill="#6a5fc4" /><rect x="6" y="7" width="6" height="6" rx="1" fill="#fff" /><path d="M12 9.500l3-2v5l-3-2z" fill="#fff" /></> },
  { name: 'Edge', art: <><circle cx="10" cy="10" r="8" fill="#1279c8" /><path d="M2 10c0-11 16-11 16 0c0 4-6 4-6 1c0-5-8-5-10-1z" fill="#3ccf8e" /><path d="M3 7c3-4 9-3 10 3c-4-4-8-1-6 5c-4-1-5-5-4-8z" fill="#27a5dc" /><circle cx="5" cy="15" r="4" fill="#333" /><circle cx="5" cy="15" r="1.500" fill="#9ab" /></> },
  { name: 'エクスプローラー', art: <><path d="M1 3h7l2 2h8v12H1z" fill="#f0b429" /><path d="M1 7h17v10H1z" fill="#fcd462" /><path d="M5 12h9v5H5z" fill="#1a83d4" /></> },
  { name: 'Microsoft Store', art: <><rect x="1.500" y="5" width="17" height="13" rx="1.500" fill="#15538c" /><path d="M7 5V2.500h6V5" stroke="#2b8ac8" strokeWidth="1.500" fill="none" /><path d="M6 8h3.500v3.500H6z" fill="#f25022" /><path d="M10.500 8H14v3.500h-3.500z" fill="#7fba00" /><path d="M6 12.500h3.500V16H6z" fill="#00a4ef" /><path d="M10.500 12.500H14V16h-3.500z" fill="#ffb900" /></> },
  { name: 'メール', art: <><path d="M1 8l9-6l9 6v9H1z" fill="#0f5ea8" /><path d="M3 7h14v7H3z" fill="#fff" /><path d="M1 8l9 6l9-6v9H1z" fill="#2ba2e8" /></> },
  { name: 'Microsoft 365', art: <><path d="M10 2l7 4v4l-7-4l-4 3v6l-4-3V6z" fill="#7a5cc8" /><path d="M10 18l-5-3l5-2l3-2V7l4 2v6z" fill="#3b7fe0" /><path d="M10 2l5 3l-5 2.500l-4 2V5z" fill="#c78be0" /></> },
  { name: 'Discord', open: true, art: <><circle cx="9" cy="11" r="8" fill="#5865f2" /><path d="M5 8c2.500-1.500 5.500-1.500 8 0l1 5.500c-1 1-2 1-3 .5H7c-1 .5-2 .5-3-.5z" fill="#fff" /><circle cx="7.300" cy="11" r="1.200" fill="#5865f2" /><circle cx="10.700" cy="11" r="1.200" fill="#5865f2" /><circle cx="15" cy="4.500" r="4.500" fill="#e84b4b" /><text x="15" y="6.500" textAnchor="middle" fontSize="5.500" fontWeight="bold" fill="#fff">9+</text></> },
  { name: 'Chrome', open: true, art: <><circle cx="9" cy="11" r="8" fill="#f9bd13" /><path d="M2 7a8 8 0 0 1 14 0H9l-3 5z" fill="#e5392e" /><path d="M2 7l4 6l4 2l-2 4A8 8 0 0 1 2 7z" fill="#2da14b" /><circle cx="9" cy="11" r="3.800" fill="#fff" /><circle cx="9" cy="11" r="2.900" fill="#3b78e7" /><circle cx="15.500" cy="4.500" r="4" fill="#ddd" /><path d="M13 7c0-4 2-5 3-5s2 3 1 6" fill="#555" /></> },
  { name: 'XM', open: true, art: <><rect x="1" y="2" width="17" height="17" fill="#0a0a0a" /><path d="M4 8l4 5M8 8l-4 5M9.500 13V8l3 4l3-4v5" stroke="#fff" strokeWidth="1.400" fill="none" /><path d="M3 10h2" stroke="#e33" /></> },
];

function Taskbar() {
  return (
    <div className="grid h-[30px] grid-cols-[1fr_auto_1fr] items-center bg-linear-to-r from-[#e0edf8] via-[#d0dcf5] to-[#e0edf8] text-[7px] text-[#333]">
      <button type="button" className="flex items-center gap-1 pl-3 text-left">
        <svg viewBox="0 0 16 16" className="size-4" aria-hidden="true">
          <circle cx="8" cy="7" r="6" fill="#f5a31f" />
          <path d="M7 13c-3 0-3-4 0-4c1-3 5-2.500 5.500 0c3 0 3 4 0 4z" fill="#b9d6f5" />
        </svg>
        <span className="leading-[9px]">27°C<br /><span className="text-[#666]">晴れのちくもり</span></span>
      </button>
      <div className="flex items-center">
        <button type="button" aria-label="スタート" className="flex w-8 justify-center">
          <svg viewBox="0 0 15 15" className="size-[15px]" fill="#1187d8"><path d="M0 0h7v7H0zM8 0h7v7H8zM0 8h7v7H0zM8 8h7v7H8z" /></svg>
        </button>
        <label className="flex h-[18px] w-[136px] items-center gap-2 rounded-full bg-[#f3f6fc] pr-px pl-1.5">
          <svg viewBox="0 0 12 12" className="size-3 shrink-0" fill="none" stroke="#222"><circle cx="5" cy="5" r="3.500" /><path d="M7.500 7.500l3 3" /></svg>
          <input aria-label="検索" placeholder="検索" className="w-16 min-w-0 bg-transparent text-[9px] placeholder:text-[#555]" />
          <svg viewBox="0 0 34 16" className="ml-auto h-4 w-[34px] shrink-0" aria-hidden="true">
            <path d="M5 6l-1 8" stroke="#8a5a2b" /><path d="M1 6c1-3 3-3 4-1c1-3 4-2 5 1c-3-1-4-1-5 0c-1-1-3-1-4 0z" fill="#3a9a4a" />
            <path d="M2 14h30" stroke="#e8c87a" strokeWidth="2" />
            <path d="M11 1.500l14-.5l1 2.500H11z" fill="#1c6fae" />
            <path d="M11 4h15l4 4.500v6H10V8z" fill="#dd3d34" /><path d="M12 5h12l3 3.500H12z" fill="#d9eef6" /><path d="M10 10.500h20" stroke="#fff" strokeWidth=".7" />
            <circle cx="14" cy="14" r="1.800" fill="#333" /><circle cx="26" cy="14" r="1.800" fill="#333" />
          </svg>
        </label>
        {APPS.map((a) => (
          <button key={a.name} type="button" aria-label={a.name} className="flex h-[26px] w-7 flex-col items-center justify-center">
            <svg viewBox="0 0 20 20" className="size-[18px]">{a.art}</svg>
            <span className={`-mb-1 h-0.5 w-1 rounded-full ${a.open ? 'bg-[#888]' : ''}`} />
          </button>
        ))}
      </div>
      <div className="flex items-center justify-end gap-2 pr-3">
        <svg viewBox="0 0 8 8" className="size-2" fill="none" stroke="#333" aria-hidden="true"><path d="M1 5.500l3-3l3 3" /></svg>
        <span className="px-1 text-[11px] leading-none">A</span>
        <svg viewBox="0 0 28 12" className="h-3 w-7" fill="none" stroke="#333" aria-hidden="true">
          <path d="M7 2H2v7h7V7M4 11h5M8 1.500h4v3H8zM10 4.500V9" />
          <path d="M16 5v3h2l2.500 2V3L18 5zM22 5c.8 1 .8 2 0 3M24 3.500c1.500 2 1.500 4 0 6" strokeWidth=".9" />
        </svg>
        <span className="text-right text-[7px] leading-[10px]">12:13<br />2023/06/17</span>
        <svg viewBox="0 0 10 12" className="-ml-1 h-3 w-2.5" fill="#222" aria-hidden="true"><path d="M1 9V5c0-4 8-5 8 0v4zM3.500 10h3c0 2-3 2-3 0z" /><path d="M5.500 4h2l-2 2.500h2" stroke="#fff" strokeWidth=".7" fill="none" /></svg>
      </div>
    </div>
  );
}

export default function App() {
  return (
    <div className="relative min-h-screen bg-[#f0f0f0] font-['Noto_Sans','Noto_Sans_CJK_JP',sans-serif] [font-feature-settings:'palt']">
      <Header />
      <main className="flex">
        <Side />
        <div className="min-w-0 flex-1">
          <Chart />
          <ChartTabs />
        </div>
      </main>
      <Toolbox />
      <Status />
      <Taskbar />
      <Palette />
    </div>
  );
}
